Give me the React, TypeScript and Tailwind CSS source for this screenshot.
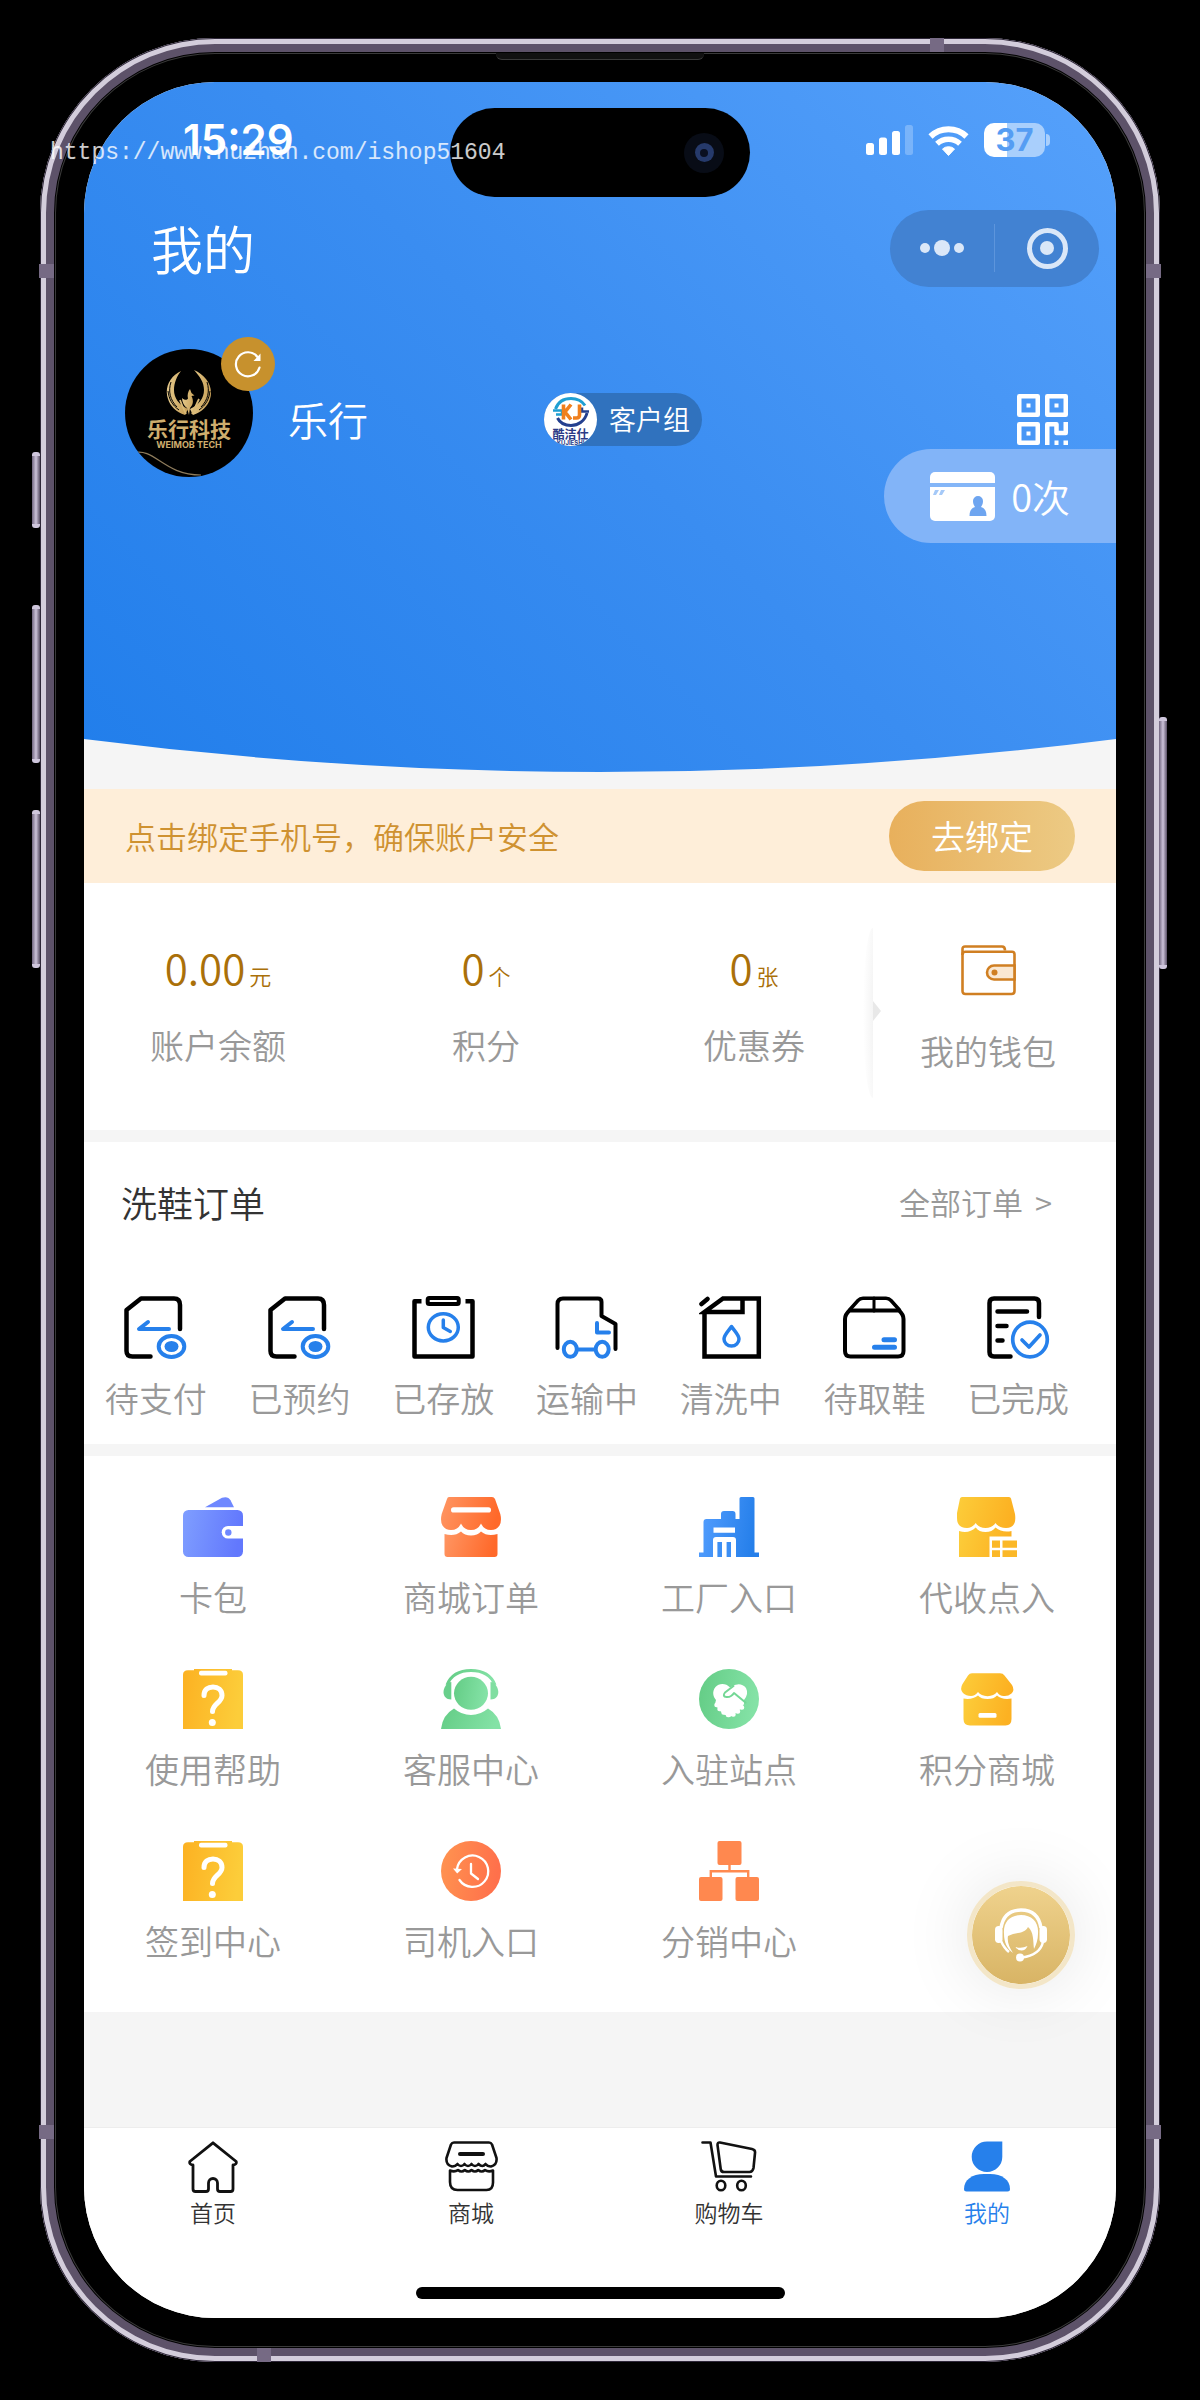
import React from "react";

type Entry = { label: string; icon: React.ReactNode };

/* ---------- shared gradients ---------- */

function Gradients() {
  const list: [string, string, string][] = [
    ["gPurple", "#7f9eff", "#6278fd"],
    ["gOrange", "#ff9663", "#ff692a"],
    ["gBlue", "#559fff", "#257fea"],
    ["gYellow", "#fcb122", "#fccd3a"],
    ["gYellowR", "#fccd3a", "#fcb122"],
    ["gGreen", "#63cc85", "#84e2a6"],
    ["gCoral", "#ff9450", "#ff704b"],
    ["gGold", "#e6cb8e", "#c9a25a"],
  ];
  return (
    <svg width="0" height="0" className="absolute" aria-hidden="true">
      <defs>
        {list.map(([id, from, to]) => (
          <linearGradient key={id} id={id} x1="0" y1="0" x2="1" y2="0.15">
            <stop offset="0" stopColor={from} />
            <stop offset="1" stopColor={to} />
          </linearGradient>
        ))}
      </defs>
    </svg>
  );
}

/* ---------- status bar ---------- */

function Signal() {
  return (
    <svg width="47" height="30" viewBox="0 0 47 30" fill="#fff" aria-hidden="true">
      <rect x="0" y="18" width="8" height="12" rx="2.5" />
      <rect x="13" y="12.500" width="8" height="17.500" rx="2.500" />
      <rect x="26" y="6" width="8" height="24" rx="2.500" />
      <rect x="39" y="0" width="8" height="30" rx="2.500" opacity="0.25" />
    </svg>
  );
}

function Wifi() {
  return (
    <svg width="41" height="31" viewBox="0 0 41 31" fill="none" aria-hidden="true">
      <path d="M2.500 11.500a26 26 0 0 1 36 0" stroke="#fff" strokeWidth="6" />
      <path d="M9 18.800a17 17 0 0 1 23 0" stroke="#fff" strokeWidth="5.500" />
      <path d="M20.500 30.500l-6-6.500a9 9 0 0 1 12 0z" fill="#fff" stroke="#fff" strokeWidth="1" strokeLinejoin="round" />
    </svg>
  );
}

function Battery() {
  return (
    <div className="flex items-center gap-px">
      <div className="flex h-[34px] w-[61px] items-center justify-center rounded-[10px] bg-[linear-gradient(90deg,#fff_38%,#a9cffc_38%)]">
        <span className="font-['Inter',sans-serif] text-[31px] leading-8 font-bold text-[#559df3]">37</span>
      </div>
      <span className="h-3 w-1 rounded-r-full bg-[#a9cffc]" />
    </div>
  );
}

/* ---------- header icons ---------- */

function QrIcon() {
  return (
    <svg width="51" height="51" viewBox="0 0 51 51" fill="none" aria-hidden="true">
      <g stroke="#fff" strokeWidth="4.500" strokeLinejoin="round">
        <rect x="2.250" y="2.250" width="18.500" height="18.500" />
        <rect x="30.250" y="2.250" width="18.500" height="18.500" />
        <rect x="2.250" y="30.250" width="18.500" height="18.500" />
        <path d="M30.250 51V30.250H39.500V39H48.750V28" />
      </g>
      <path fill="#fff" d="M9.500 9.500h4v4h-4zM37.500 9.500h4v4h-4zM9.500 37.500h4v4h-4zM37.500 46.500h4V51h-4zM46.500 46.500H51V51h-4.500z" />
    </svg>
  );
}

function CardIcon() {
  return (
    <svg width="65" height="49" viewBox="0 0 65 49" aria-hidden="true">
      <rect width="65" height="49" rx="5" fill="#fff" />
      <rect y="11" width="65" height="4" fill="#84b6f8" />
      <path d="M5 18h4l-3 5H3zM11 18h4l-3 5H9z" fill="#a5c9f8" />
      <path d="M48 24a5 5 0 0 1 5 5c0 3-1 4-2 6 3 1 5.500 3 5.500 9h-17c0-6 2.500-8 5.500-9-1-2-2-3-2-6a5 5 0 0 1 5-5z" fill="#6ea5f0" />
    </svg>
  );
}

function Phoenix() {
  return (
    <svg width="46" height="46" viewBox="0 0 46 46" fill="url(#gGold)" aria-hidden="true">
      <path d="M15 1C4 6-2 18 2 29c2 7 8 13 17 16l3-6C13 35 8 28 8 20 8 13 11 6 15 1z" />
      <path d="M28 0c12 5 20 17 16 29-2 7-8 13-17 16l-3-6c9-4 14-11 14-19S34 7 28 0z" />
      <path d="M5 12c-3 9-1 18 6 25M41 12c3 9 1 18-6 25M2 21c1 8 4 14 11 19M44 21c-1 8-4 14-11 19" stroke="#000" strokeWidth="1" fill="none" />
      <path d="M24 19l1.500 4 3 2.500-3 .5c2.500 5 1.500 9-1.500 12l-1 7-2-7c-3-2-5-6-5-10 2 2 5 2.500 6 .500-1-3 0-7 2-9.500z" />
      <path d="M14 30c2 6 4 10 6 14M33 29c-3 6-5 11-7 15" stroke="#d9b976" strokeWidth="1.800" fill="none" />
    </svg>
  );
}

function Avatar() {
  return (
    <div className="relative shrink-0">
      <div className="relative flex h-32 w-32 flex-col items-center overflow-hidden rounded-full bg-black pt-[21px]">
        <Phoenix />
        <span className="text-[21px] leading-6 font-bold whitespace-nowrap text-[#cfae6e]">乐行科技</span>
        <span className="font-['Inter',sans-serif] text-[9px] leading-[10px] font-bold whitespace-nowrap text-[#cfae6e]">WEIMOB TECH</span>
        <svg className="absolute bottom-0 left-0" width="80" height="28" viewBox="0 0 80 28" fill="none" aria-hidden="true">
          <path d="M8 4C30-2 38 26 76 26" stroke="#8e7c5c" strokeWidth="1.200" />
        </svg>
      </div>
      <button type="button" aria-label="刷新" className="absolute -top-3 -right-[22px] flex h-[54px] w-[54px] items-center justify-center rounded-full bg-[#c7912d]">
        <svg width="28" height="28" viewBox="0 0 28 28" fill="none" aria-hidden="true">
          <path d="M25.500 17.500A12 12 0 1 1 23.500 7" stroke="#fff" strokeWidth="2.200" strokeLinecap="round" />
          <path d="M26.500 3.500v7.500h-7z" fill="#fff" />
        </svg>
      </button>
    </div>
  );
}

function GroupBadge() {
  return (
    <div className="flex h-[53px] items-center gap-3 rounded-full bg-[#3072be] pr-3">
      <div className="flex h-[53px] w-[53px] flex-col items-center overflow-hidden rounded-full bg-white pt-1">
        <svg width="36" height="30" viewBox="0 0 36 30" fill="none" className="shrink-0" aria-hidden="true">
          <path d="M2.500 12C5 5 11 1.500 18 1.500c6 0 11 2.500 14 7" stroke="#1f9fd2" strokeWidth="3" />
          <path d="M0 13.500h9v4H3" stroke="#1f9fd2" strokeWidth="2.500" />
          <path d="M34 16c-2 8-9 12.500-16 12.500C12 28.500 7 26 4.500 21" stroke="#24408f" strokeWidth="3" />
          <path d="M36 14.500h-7v-4" stroke="#24408f" strokeWidth="2.500" />
          <path d="M10.500 7.500v15M18 7.500l-6 7.500 6 7.500M26.500 7.500v10.500q0 3-3 3h-3.500" stroke="#f07f1d" strokeWidth="3.600" />
        </svg>
        <span className="mt-px text-[12px] leading-3 font-bold whitespace-nowrap text-[#2b3a86]">酷洁仕</span>
        <span className="font-['Inter',sans-serif] text-[6px] leading-[6px] font-bold whitespace-nowrap text-[#2b3a86]">KUJIESHI</span>
      </div>
      <span className="text-[27px] leading-8 text-white">客户组</span>
    </div>
  );
}

/* ---------- wallet summary ---------- */

function WalletIcon() {
  return (
    <svg width="55" height="51" viewBox="0 0 55 51" fill="none" stroke="#d07f22" strokeWidth="2.600" aria-hidden="true">
      <path d="M1.500 10V4q0-2.500 2.500-2.500h37q3 0 3 4" />
      <path d="M1.500 9Q2 6.800 4.500 6.800H51q2.500 0 2.500 2.500V46q0 3-3 3h-46q-3 0-3-3z" />
      <path d="M53.500 20.500H33a7 7 0 0 0 0 14H53.500z" fill="#fae8d2" />
      <circle cx="33.500" cy="27.500" r="3" fill="#d07f22" stroke="none" />
    </svg>
  );
}

/* ---------- order status icons ---------- */

function OrderSvg({ children }: { children: React.ReactNode }) {
  return (
    <svg width="63" height="63" viewBox="0 0 63 63" fill="none" stroke="#000" strokeWidth="4.500" strokeLinecap="round" strokeLinejoin="round" aria-hidden="true">
      {children}
    </svg>
  );
}

function PayIcon() {
  return (
    <OrderSvg>
      <path d="M56 33V9q0-6.500-6-6.500H17L2.500 14v41q0 5.500 6 5.500h18" />
      <g stroke="#2680eb" strokeWidth="4">
        <path d="M24 26l-9 7h30" />
        <ellipse cx="47.500" cy="50.500" rx="12.800" ry="10.400" />
      </g>
      <ellipse cx="47.500" cy="50.500" rx="7" ry="5.600" fill="#2680eb" stroke="none" />
    </OrderSvg>
  );
}

function StoredIcon() {
  return (
    <OrderSvg>
      <path d="M9.500 5.300H2.500V60.500H60.500V5.300H53.500" strokeLinecap="butt" />
      <rect x="15.700" y="2" width="31" height="6" rx="1.500" strokeWidth="4" />
      <g stroke="#2680eb" strokeWidth="3.500">
        <ellipse cx="31.300" cy="31.300" rx="15" ry="13.600" />
        <path d="M31.300 24v7.500l7 4" />
      </g>
    </OrderSvg>
  );
}

function TruckIcon() {
  return (
    <OrderSvg>
      <path d="M2.500 52V8q0-5.500 5.500-5.500h35q3.500 0 3.500 3.500v14l14 8v25" strokeWidth="4" />
      <g stroke="#2680eb" strokeWidth="4">
        <path d="M42 27v9.500h12M22.500 53.500h17" />
        <ellipse cx="15.300" cy="53.300" rx="6.500" ry="7.500" />
        <ellipse cx="47.200" cy="53.300" rx="6.500" ry="7.500" />
      </g>
    </OrderSvg>
  );
}

function WashIcon() {
  return (
    <OrderSvg>
      <path d="M5.500 17V60.500H59.800V2.500H24L5.500 16H43.500V3" strokeLinejoin="miter" />
      <path d="M2.500 8l6-5" strokeWidth="4.500" />
      <path d="M32.500 30.500c3 4.500 7.500 8.500 7.500 12.500a7.500 7 0 0 1-15 0c0-4 4.500-8 7.500-12.500z" stroke="#2680eb" strokeWidth="3.500" />
    </OrderSvg>
  );
}

function PickupIcon() {
  return (
    <OrderSvg>
      <path d="M6.500 14L15 4.500Q17 2.200 20 2.200h23q3 0 5 2.300l8.500 9.500" strokeWidth="3.500" />
      <path d="M6.500 14.500h49.500q4.500 4 4.500 8.500V55q0 5.500-5.500 5.500H7.500Q2 60.500 2 55V23q0-4.500 4.500-8.500z" strokeWidth="4" />
      <path d="M31 2v13" strokeWidth="3" />
      <path d="M41 43.800h10.500M31.500 51.300h20" stroke="#2680eb" strokeWidth="5" />
    </OrderSvg>
  );
}

function DoneIcon() {
  return (
    <OrderSvg>
      <path d="M52 21V7q0-4.500-4.500-4.500H7Q2.500 2.500 2.500 7v49q0 4.500 4.500 4.500h16.500M10.500 15.600h29.500M10.500 30h9M10.500 44.600h5" />
      <g stroke="#2680eb" strokeWidth="3.700">
        <circle cx="43" cy="43.500" r="17.300" />
        <path d="M35 44l7 7 11-12" />
      </g>
    </OrderSvg>
  );
}

/* ---------- service icons ---------- */

function ServiceSvg({ children }: { children: React.ReactNode }) {
  return (
    <svg width="60" height="60" viewBox="0 0 60 60" fill="none" aria-hidden="true">
      {children}
    </svg>
  );
}

function CardPackIcon() {
  return (
    <ServiceSvg>
      <path d="M22 10.300L39 .8q6-2 8.500 2.500l3.500 7z" fill="#6f88ff" />
      <rect y="13" width="60" height="47" rx="5.500" fill="url(#gPurple)" />
      <path d="M60 29H45a6.300 6.300 0 0 0 0 12.600H60z" fill="#fff" />
      <circle cx="45.300" cy="35.500" r="3.200" fill="#6f88ff" />
    </ServiceSvg>
  );
}

function MallOrderIcon() {
  return (
    <ServiceSvg>
      <path fill="url(#gOrange)" d="M8 0H51q2 0 3 2l5.300 15q1.700 7-.8 11.500Q55.500 33 50 33q-7 0-10-6.500Q37 33 30 33t-10-6.500Q17 33 10 33q-5.500 0-8.500-4.500Q-1 24 .7 17L6 2Q6.500 0 8 0z" />
      <rect x="10" y="10.300" width="40" height="5.200" rx="2.600" fill="#fff" />
      <path fill="url(#gOrange)" d="M3.500 37q10 3 16.500-2.500 3.500 4 10 4t10-4Q46.500 40 56.500 37V57q0 3-3 3h-47q-3 0-3-3z" />
    </ServiceSvg>
  );
}

function FactoryIcon() {
  return (
    <ServiceSvg>
      <path fill="url(#gBlue)" d="M0 60v-4.500h4.500V25q0-3 3-3H22v-5q0-3 3-3h8.500q3 0 3 3v5h4V1.500q0-1.500 1.500-1.500h12q1.500 0 1.500 1.500v54H60V60z" />
      <path fill="#fff" d="M14.500 30.500H36v5.200H14.500zM14 60V43q0-3 3-3h17q3 0 3 3v17z" />
      <path fill="#3d8ff4" d="M18.400 45H23v15h-4.600zM27.600 45H32v15h-4.400z" />
    </ServiceSvg>
  );
}

function CollectIcon() {
  return (
    <ServiceSvg>
      <path fill="url(#gYellowR)" d="M5 0h47q1.500 0 2 1.500L58 17q2 14-9 14-7 0-10.500-5Q35 31 28.500 31t-9.800-5Q15 31 10 31 0 31 0 21V16L3 1.500Q3.500 0 5 0z" />
      <path fill="url(#gYellowR)" d="M2 34q10 3 16.700-3.500Q22 35 28.500 35t10-4.500Q45 36 54.500 34v5.500h-22V60H2z" />
      <path fill="#fbb828" d="M35 43.500h8v7.300h-8zM45.500 43.500H60v7.300H45.500zM35 53.200h8V60h-8zM45.500 53.200H60V60H45.500z" />
    </ServiceSvg>
  );
}

function QuestionIcon() {
  return (
    <ServiceSvg>
      <path fill="url(#gYellow)" d="M5 1.200h6V0h38v1.200h6q5 0 5 4.500V60H0V5.700Q0 1.200 5 1.200z" />
      <rect x="16" y="1.800" width="28.500" height="4.800" rx="2" fill="#fff" />
      <path d="M21 26.500c0-6 4-8.500 9-8.500s9 3 9 8.500c0 7-9.500 8.500-9.500 16" stroke="#fff" strokeWidth="5" strokeLinecap="round" />
      <circle cx="29.300" cy="53.500" r="3.500" fill="#fff" />
    </ServiceSvg>
  );
}

function SupportIcon() {
  return (
    <ServiceSvg>
      <path d="M6 16C10 6 19 1.500 30 1.500S50 6 54 16" stroke="url(#gGreen)" strokeWidth="3" />
      <path d="M10.300 13v17.500C5 30.500 2.500 27 2.500 23S6 13 10.300 13z" fill="#68cf8b" />
      <path d="M49.500 13v17.500c5.300 0 7.800-3.500 7.800-7.500S54 13 49.500 13z" fill="#80dea1" />
      <ellipse cx="30" cy="24.300" rx="17" ry="16.500" fill="url(#gGreen)" />
      <path d="M0 60Q1.500 46 13 39.500q7.500 6.500 17 6.500t17-6.500Q58.500 46 60 60z" fill="url(#gGreen)" />
    </ServiceSvg>
  );
}

function HandshakeIcon() {
  return (
    <ServiceSvg>
      <circle cx="30" cy="30" r="30" fill="url(#gGreen)" />
      <path d="M31 18.500C27 14 20 14 16.500 18c-4 5-2 10 .5 13L16 35q7 11 14 12.500Q39 45 45 35v-4q5-6 2-12-6-7-16-.5z" fill="#fff" />
      <path d="M17.500 36h1M20.500 40h1M24.500 43.500h1M29 46h1M34 45.500h.500M38.500 42.500h.500M42.500 38.500h.500" stroke="#fff" strokeWidth="4.500" strokeLinecap="round" />
      <path d="M34.500 17L26 23.500q-3 4 1.500 4.500 4.500.5 7.500-4l11.500 9.500" stroke="#74d795" strokeWidth="2" strokeLinecap="round" strokeLinejoin="round" />
    </ServiceSvg>
  );
}

function PointsMallIcon() {
  return (
    <ServiceSvg>
      <path fill="url(#gYellowR)" d="M15 4.300H43q3 0 4.500 2.200L55 16q3 5-.5 8.500-3.500 3-8 2.500-4 0-6.500-4-3 4-9.500 4.200Q24 27 21 23q-3 4-7 4-5 0-8-3-3.500-4-.5-9L11 6.500Q12.500 4.300 15 4.300z" />
      <path fill="url(#gYellowR)" d="M6.500 29.500Q15 31 21 26.500q3 3.500 9.500 3.500t9.500-3.500q5 4.500 14.500 3V50q0 6.500-6 6.500H13q-6.500 0-6.500-6.500z" />
      <rect x="21.500" y="44" width="18" height="4.700" rx="1.500" fill="#fff" />
    </ServiceSvg>
  );
}

function DriverIcon() {
  return (
    <ServiceSvg>
      <circle cx="30" cy="30" r="30" fill="url(#gCoral)" />
      <g stroke="#fff" strokeWidth="2.300" strokeLinecap="round" strokeLinejoin="round">
        <path d="M16 28a15.700 15.700 0 1 1 2.500 11" />
        <path d="M30 23v9.500l7 5.500" />
      </g>
      <path d="M12 27.500l9 .5-4.800 4.500z" fill="#fff" />
    </ServiceSvg>
  );
}

function DistributionIcon() {
  return (
    <ServiceSvg>
      <g fill="#ff884f">
        <rect x="18.500" width="24" height="24" rx="2" />
        <rect y="36" width="23.500" height="24" rx="2" />
        <rect x="36.500" y="36" width="23.500" height="24" rx="2" />
      </g>
      <path d="M30.500 24v6M11.800 37v-6.700h37.400V37" stroke="#ff8a50" strokeWidth="2.400" />
    </ServiceSvg>
  );
}

function AgentIcon() {
  return (
    <svg width="52" height="54" viewBox="0 0 52 54" fill="none" aria-hidden="true">
      <path d="M6 20C8 7 16 2 26 2s18 5 20 18" stroke="#fff" strokeWidth="3.500" />
      <rect x="0" y="18" width="7.500" height="17" rx="3.700" fill="#fff" />
      <rect x="44.500" y="18" width="7.500" height="17" rx="3.700" fill="#fff" />
      <path d="M9 26C8 14 15 7 26 7s18 7 17 19c0 6-2 11-4 15-1-8 0-17-6-22-3 7-12 5-20 9-1 5 1 11 5 17C12 41 9 34 9 26z" fill="#fff" />
      <path d="M6 33q3 7 8 11M48 34c-2 8-9 14-21 15.500" stroke="#fff" strokeWidth="2.500" />
      <path d="M20.500 39q6 2 12-1-2 4.500-6 4.500t-6-3.500z" fill="#fff" />
      <circle cx="25" cy="49.500" r="4" fill="#fff" />
    </svg>
  );
}

/* ---------- tab bar icons ---------- */

function HomeIcon() {
  return (
    <svg width="50" height="52" viewBox="0 0 50 52" fill="none" stroke="#111" strokeWidth="2.800" strokeLinejoin="round" aria-hidden="true">
      <path d="M25 1.800L1.800 20.500q-.8 3 3.200 3.500v24q0 2.500 2.500 2.500H18q2.500 0 2.500-2.500v-6a4.500 4.500 0 0 1 9 0v6q0 2.500 2.500 2.500h10.500q2.500 0 2.500-2.500V24q4-.5 3.200-3.500z" />
    </svg>
  );
}

function ShopIcon() {
  return (
    <svg width="53" height="52" viewBox="0 0 53 52" fill="none" stroke="#111" strokeWidth="2.600" strokeLinejoin="round" strokeLinecap="round" aria-hidden="true">
      <path d="M9 1.500h35q2 0 3 2L51.500 17q.8 7-5.500 8.500-3.500 0-5.500-2.500-3 4-7 0-3.500 4-7 0-3.500 4-7 0-3.500 4-7 0-2 2.500-5.500 2.500Q.7 24 1.500 17L6 3.500Q7 1.500 9 1.500z" />
      <path d="M15 13h23" strokeWidth="4" />
      <path d="M5 29.500q4.500 2 8-.5 3.500 3 6.800 0 3.500 3 6.700 0 3.500 3 6.700 0 3.500 3 6.800 0 3.500 2.500 8 .5v12q0 7.500-6.500 7.500h-29Q5 49 5 41z" />
    </svg>
  );
}

function CartIcon() {
  return (
    <svg width="56" height="52" viewBox="0 0 56 52" fill="none" stroke="#111" strokeWidth="2.600" strokeLinejoin="round" strokeLinecap="round" aria-hidden="true">
      <path d="M1.500 1.500h8L15 35.500h35" />
      <path d="M19 1.500L51 8q3.500.8 3 4l-1.500 15q-.8 4-4 4H23q-3 0-3.300-3L16.500 4q0-3 2.500-2.500z" />
      <ellipse cx="20" cy="44.500" rx="4.300" ry="4.800" />
      <ellipse cx="40.500" cy="44.500" rx="4.300" ry="4.800" />
    </svg>
  );
}

function UserIcon() {
  return (
    <svg width="46" height="52" viewBox="0 0 46 52" fill="#2680eb" aria-hidden="true">
      <path d="M23 .5h15.300v15.300A15.300 15.300 0 1 1 23 .5z" />
      <path d="M20 33h6c12 0 20 6 20 15q0 2.500-2.500 2.500h-41Q0 50.500 0 48c0-9 8-15 20-15z" />
    </svg>
  );
}

/* ---------- data ---------- */

const balances = [
  { value: "0.00", unit: "元", label: "账户余额" },
  { value: "0", unit: "个", label: "积分" },
  { value: "0", unit: "张", label: "优惠券" },
];

const orders: Entry[] = [
  { label: "待支付", icon: <PayIcon /> },
  { label: "已预约", icon: <PayIcon /> },
  { label: "已存放", icon: <StoredIcon /> },
  { label: "运输中", icon: <TruckIcon /> },
  { label: "清洗中", icon: <WashIcon /> },
  { label: "待取鞋", icon: <PickupIcon /> },
  { label: "已完成", icon: <DoneIcon /> },
];

const services: Entry[] = [
  { label: "卡包", icon: <CardPackIcon /> },
  { label: "商城订单", icon: <MallOrderIcon /> },
  { label: "工厂入口", icon: <FactoryIcon /> },
  { label: "代收点入", icon: <CollectIcon /> },
  { label: "使用帮助", icon: <QuestionIcon /> },
  { label: "客服中心", icon: <SupportIcon /> },
  { label: "入驻站点", icon: <HandshakeIcon /> },
  { label: "积分商城", icon: <PointsMallIcon /> },
  { label: "签到中心", icon: <QuestionIcon /> },
  { label: "司机入口", icon: <DriverIcon /> },
  { label: "分销中心", icon: <DistributionIcon /> },
];

const tabs: (Entry & { active?: boolean })[] = [
  { label: "首页", icon: <HomeIcon /> },
  { label: "商城", icon: <ShopIcon /> },
  { label: "购物车", icon: <CartIcon /> },
  { label: "我的", icon: <UserIcon />, active: true },
];

/* ---------- sections ---------- */

function Header() {
  return (
    <header className="relative bg-[linear-gradient(45deg,#217eeb_0%,#3a8df1_50%,#56a1fb_100%)] pb-[230px]">
      <div className="flex h-[116px] items-center justify-between pr-[66px] pl-[99px]">
        <time className="font-['Inter',sans-serif] text-[42px] leading-[52px] font-semibold text-white">15:29</time>
        <div className="flex items-center gap-[15px]">
          <Signal />
          <Wifi />
          <Battery />
        </div>
      </div>

      <div className="flex h-[100px] items-center justify-between pr-[17px] pl-[67px]">
        <h1 className="text-[52px] leading-[60px] text-white">我的</h1>
        <div className="flex h-[77px] w-[209px] items-center rounded-full bg-[#4282d2]">
          <button type="button" aria-label="更多" className="flex h-full flex-1 items-center justify-center gap-1">
            <span className="h-2.5 w-2.5 rounded-full bg-[#dae7f8]" />
            <span className="h-4 w-4 rounded-full bg-[#dae7f8]" />
            <span className="h-2.5 w-2.5 rounded-full bg-[#dae7f8]" />
          </button>
          <span className="h-12 w-px bg-[#5d95dc]" />
          <button type="button" aria-label="关闭" className="flex h-full flex-1 items-center justify-center">
            <span className="flex h-[41px] w-[41px] items-center justify-center rounded-full border-[5px] border-[#dae7f8]">
              <span className="h-3.5 w-3.5 rounded-full bg-[#dae7f8]" />
            </span>
          </button>
        </div>
      </div>

      <div className="flex items-center pt-[51px] pr-12 pl-[41px]">
        <Avatar />
        <div className="flex flex-1 items-center pt-3 pl-[35px]">
          <span className="w-64 text-[40px] leading-[50px] text-white">乐行</span>
          <GroupBadge />
          <button type="button" aria-label="二维码" className="ml-auto">
            <QrIcon />
          </button>
        </div>
      </div>

      <div className="-mt-7 flex justify-end">
        <button type="button" className="flex h-[94px] items-center gap-4 rounded-l-full bg-[#82b4f8] pr-[46px] pl-[46px]">
          <CardIcon />
          <span className="text-[38px] leading-[50px] text-white">0次</span>
        </button>
      </div>

      <svg className="absolute bottom-0 left-0 h-[34px] w-full" viewBox="0 0 1032 34" preserveAspectRatio="none" aria-hidden="true">
        <path d="M0 0Q516 66 1032 0V34H0z" fill="#f5f5f5" />
      </svg>
    </header>
  );
}

function BindBar() {
  return (
    <section className="mt-4 flex h-[94px] items-center justify-between bg-[#feeed9] pr-[41px] pl-[41px]">
      <p className="text-[31px] leading-10 text-[#cf9231]">点击绑定手机号，确保账户安全</p>
      <button type="button" className="h-[70px] w-[186px] rounded-full bg-[linear-gradient(90deg,#e8b05c,#ecca84)] text-[34px] leading-10 text-white">
        去绑定
      </button>
    </section>
  );
}

function Balance() {
  return (
    <section className="flex h-[247px] bg-white">
      <dl className="grid flex-1 grid-cols-3 pt-[60px]">
        {balances.map((b) => (
          <div key={b.label} className="flex flex-col-reverse items-center justify-end gap-[26px]">
            <dt className="text-[34px] leading-10 text-[#999]">{b.label}</dt>
            <dd className="flex items-baseline gap-1 text-[#aa7009]">
              <span className="text-[42px] leading-[48px]">{b.value}</span>
              <span className="text-[22px] leading-[48px]">{b.unit}</span>
            </dd>
          </div>
        ))}
      </dl>
      <button type="button" className="relative flex w-[228px] flex-col items-center justify-start pt-[62px] pr-7">
        <svg className="absolute top-[45px] -left-[27px]" width="22" height="170" viewBox="0 0 22 170" aria-hidden="true">
          <defs>
            <radialGradient id="fold" cx="1" cy="0.500" r="1">
              <stop offset="0" stopColor="#e6e6e6" />
              <stop offset="0.500" stopColor="#f4f4f4" />
              <stop offset="1" stopColor="#fff" />
            </radialGradient>
          </defs>
          <ellipse cx="12" cy="85" rx="10" ry="85" fill="url(#fold)" />
          <rect x="12" width="10" height="170" fill="#fff" />
          <path d="M12 73l8 10-8 10z" fill="#e8e8e8" />
        </svg>
        <WalletIcon />
        <span className="mt-[35px] text-[34px] leading-10 text-[#999]">我的钱包</span>
      </button>
    </section>
  );
}

function Orders() {
  return (
    <section className="mt-3 bg-white pb-[26px]">
      <div className="flex h-[120px] items-center justify-between pr-16 pl-[37px]">
        <h2 className="text-[36px] leading-[44px] text-[#333]">洗鞋订单</h2>
        <a href="#orders" className="flex gap-3 text-[31px] leading-10 text-[#999]">
          <span>全部订单</span>
          <span>&gt;</span>
        </a>
      </div>
      <ul className="grid grid-cols-7 pt-[34px] pr-[26px]">
        {orders.map((o) => (
          <li key={o.label}>
            <a href="#order" className="flex flex-col items-center gap-[19px]">
              {o.icon}
              <span className="text-[34px] leading-10 whitespace-nowrap text-[#999]">{o.label}</span>
            </a>
          </li>
        ))}
      </ul>
    </section>
  );
}

function Services() {
  return (
    <section className="relative mt-3 bg-white pt-[41px] pb-[51px]">
      <ul className="grid grid-cols-4 gap-y-[52px]">
        {services.map((s) => (
          <li key={s.label}>
            <a href="#service" className="flex flex-col items-center gap-5">
              {s.icon}
              <span className="text-[34px] leading-10 whitespace-nowrap text-[#999]">{s.label}</span>
            </a>
          </li>
        ))}
      </ul>
      <button
        type="button"
        aria-label="在线客服"
        className="absolute right-[41px] bottom-[23px] flex h-[108px] w-[108px] items-center justify-center rounded-full border-[5px] border-[#f3e6c8] bg-[linear-gradient(180deg,#efd28d,#d8b465)] bg-clip-padding shadow-[0_0_70px_rgba(0,0,0,0.1)]"
      >
        <AgentIcon />
      </button>
    </section>
  );
}

function TabBar() {
  return (
    <footer className="mt-[115px] border-t border-[#ededed] bg-white pt-[13px] pb-[19px]">
      <nav className="grid grid-cols-4">
        {tabs.map((t) => (
          <a
            key={t.label}
            href="#tab"
            aria-current={t.active ? "page" : undefined}
            className={`flex flex-col items-center gap-[5px] text-[23px] leading-7 ${t.active ? "text-[#2680eb]" : "text-[#333]"}`}
          >
            {t.icon}
            <span>{t.label}</span>
          </a>
        ))}
      </nav>
      <div className="mx-auto mt-[61px] h-3 w-[369px] rounded-full bg-black" />
    </footer>
  );
}

/* ---------- device ---------- */

const sideKey =
  "absolute w-2 rounded-[3px] border-y-4 border-[#cfc6dc] bg-[linear-gradient(90deg,#6f647d,#cdc3da_50%,#5a5066)]";
const band = "absolute bg-[#766a84]";

function Island() {
  return (
    <div className="absolute top-[70px] left-1/2 flex h-[89px] w-[300px] -translate-x-1/2 items-center justify-end rounded-full bg-black pr-[26px]">
      <span className="flex h-10 w-10 items-center justify-center rounded-full bg-[#080c16]">
        <span className="flex h-[19px] w-[19px] items-center justify-center rounded-full bg-[#263a6b]">
          <span className="h-2 w-2 rounded-full bg-[#0a0f20]" />
        </span>
      </span>
    </div>
  );
}

export default function App() {
  return (
    <div className="bg-black px-10 py-[38px] font-['Noto_Sans_CJK_SC',sans-serif] font-[350]">
      <Gradients />
      <div className="relative rounded-[175px] bg-black p-11 shadow-[inset_0_0_0_1px_#2e2738,inset_0_0_0_6px_#d3cddb,inset_0_0_0_14px_#5d5269,inset_0_0_0_15px_#000,inset_0_0_0_16px_#3a3a3a]">
        <span className={`${sideKey} top-[414px] -left-2 h-[76px]`} />
        <span className={`${sideKey} top-[567px] -left-2 h-[158px]`} />
        <span className={`${sideKey} top-[772px] -left-2 h-[158px]`} />
        <span className={`${sideKey} top-[679px] -right-[7px] h-[252px]`} />
        <span className={`${band} top-[226px] -left-px h-3.5 w-[15px]`} />
        <span className={`${band} top-[226px] -right-px h-3.5 w-[15px]`} />
        <span className={`${band} bottom-[223px] -left-px h-3.5 w-[15px]`} />
        <span className={`${band} -right-px bottom-[223px] h-3.5 w-[15px]`} />
        <span className={`${band} top-0 right-[216px] h-3.5 w-3.5`} />
        <span className={`${band} bottom-0 left-[217px] h-3.5 w-3.5`} />
        <span className="absolute top-[15px] left-1/2 h-[7px] w-[208px] -translate-x-1/2 rounded-b-md border-b border-[#3a3a3a] bg-[#111]" />

        <main className="relative overflow-hidden rounded-[131px] bg-[#f5f5f5]">
          <Header />
          <BindBar />
          <Balance />
          <Orders />
          <Services />
          <TabBar />
        </main>
        <Island />
        <p className="absolute top-[101px] left-2.5 font-['Liberation_Mono',monospace] text-[23px] leading-7 font-normal text-white/80">
          https://www.huzhan.com/ishop51604
        </p>
      </div>
    </div>
  );
}
